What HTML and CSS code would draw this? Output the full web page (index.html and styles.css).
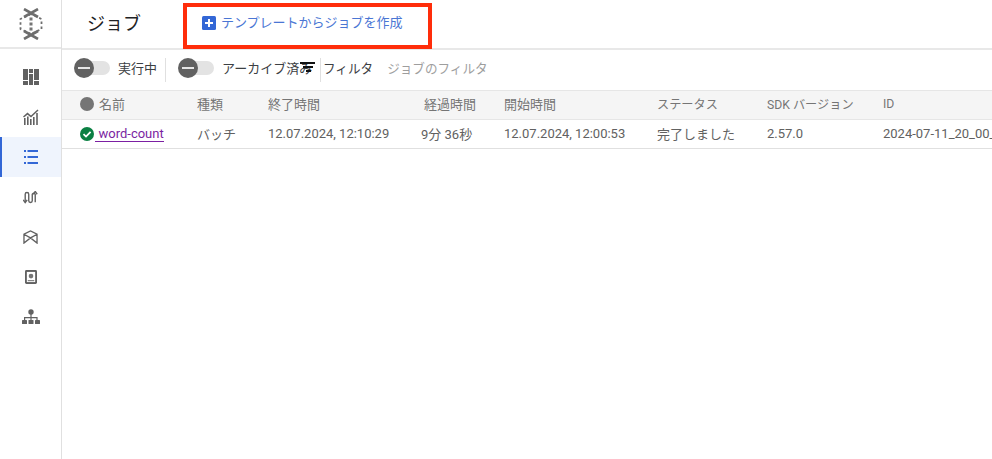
FILE: index.html
```html
<!DOCTYPE html>
<html lang="ja">
<head>
<meta charset="utf-8">
<title>ジョブ</title>
<link rel="stylesheet" href="styles.css">
</head>
<body>
<div class="app">
  <nav class="rail">
    <div class="logo">
      <svg width="24" height="32" viewBox="0 0 24 32" fill="none" stroke="#6e6e6e">
        <path d="M5 1 L19 9 M19 1 L5 9 M5 31 L19 23 M19 31 L5 23" stroke-width="2.600"/>
        <path d="M12 6 L1.500 11 V21 L12 26 L22.500 21 V11 Z" stroke-width="1.800" stroke-dasharray="2.500 2.500"/>
        <g fill="#757575" stroke="none"><rect x="10.500" y="9.500" width="3" height="3"/><rect x="10.500" y="14.500" width="3" height="3"/><rect x="10.500" y="19.500" width="3" height="3"/></g>
      </svg>
    </div>
    <a class="rail-item">
      <svg width="16" height="16" viewBox="0 0 16 16" fill="#616161"><path d="M0 0h5v11H0zM6 0h4v4H6zM11 0h5v11h-5zM6 5h4v11H6zM0 12h5v4H0zM11 12h5v4h-5z"/></svg>
    </a>
    <a class="rail-item">
      <svg width="16" height="16" viewBox="0 0 16 16" fill="#616161"><path d="M1 16V9h1.600v7zM4 16V7.500h1.600V16zM7 16V10h1.600v6zM10 16V8h1.600v8zM13.200 16V4h1.600v12z"/><path d="M.5 8 4.500 4.600 8 7.600 15 1" fill="none" stroke="#616161" stroke-width="1.500"/></svg>
    </a>
    <a class="rail-item active">
      <svg width="14" height="14" viewBox="0 0 14 14" fill="#3367d6"><path d="M0 0h2v2H0zM3.500 0H14v2H3.500zM0 6h2v2H0zM3.500 6H14v2H3.500zM0 12h2v2H0zM3.500 12H14v2H3.500z"/></svg>
    </a>
    <a class="rail-item">
      <svg width="15" height="13" viewBox="0 0 16 14" fill="none" stroke="#616161" stroke-width="1.500"><path d="M2.300 12V3.500a1.900 1.900 0 0 1 3.800 0V10.500a1.900 1.900 0 0 0 3.800 0V3.500a1.700 1.700 0 0 1 3.200 0V12"/><path d="M.2 9.500 2.300 12.500 4.400 9.500M11 3.500 13.100 .5 15.200 3.500"/></svg>
    </a>
    <a class="rail-item">
      <svg width="15" height="14" viewBox="0 0 16 15" fill="none" stroke="#616161" stroke-width="1.400"><path d="M1 14V4.500L8 1l7 3.500V14L8 8.500zM1 4.500 8 8.500l7-4"/></svg>
    </a>
    <a class="rail-item">
      <svg width="12" height="14" viewBox="0 0 13 15"><rect width="13" height="15" rx="1.500" fill="#616161"/><rect x="2" y="2" width="9" height="11" fill="#fff"/><circle cx="6.500" cy="6.500" r="2.500" fill="#757575"/><rect x="3" y="11" width="7" height="1" fill="#616161"/></svg>
    </a>
    <a class="rail-item">
      <svg width="18" height="16" viewBox="0 0 18 16" fill="#616161"><circle cx="9" cy="3" r="2.700"/><path d="M8.400 5h1.200v3h6v3h-1.200V9.200H9.600V11H8.400V9.200H3.200V11H2V8h6.400z"/><rect x="0" y="11" width="5" height="4" rx=".6"/><rect x="6.500" y="11" width="5" height="4" rx=".6"/><rect x="13" y="11" width="5" height="4" rx=".6"/></svg>
    </a>
  </nav>
  <main class="content">
    <header class="topbar">
      <h1 class="title">ジョブ</h1>
      <div class="create-box">
        <a class="create">
          <span class="plus"><svg width="14" height="14" viewBox="0 0 14 14"><rect width="14" height="14" rx="1.500" fill="#3367d6"/><path d="M3 7h8M7 3v8" stroke="#fff" stroke-width="2"/></svg></span>
          テンプレートからジョブを作成
        </a>
      </div>
    </header>
    <div class="toolbar">
      <span class="toggle"><span class="track"></span><span class="knob"></span></span>
      <span class="toggle-label running">実行中</span>
      <span class="divider"></span>
      <span class="toggle second"><span class="track"></span><span class="knob"></span></span>
      <span class="toggle-label archive">アーカイブ済み</span>
      <svg class="filter-icon" width="15" height="10" viewBox="0 0 15 10" fill="#111"><path d="M0 0h15v2H0zM3 4h10v2H3zM6 8h5v2H6z"/></svg>
      <span class="divider tight"></span>
      <span class="filter-label">フィルタ</span>
      <span class="filter-hint">ジョブのフィルタ</span>
    </div>
    <div class="row head">
      <div class="cell name"><span class="dot"></span>名前</div>
      <div class="cell">種類</div>
      <div class="cell">終了時間</div>
      <div class="cell">経過時間</div>
      <div class="cell">開始時間</div>
      <div class="cell narrow">ステータス</div>
      <div class="cell narrow">SDK バージョン</div>
      <div class="cell narrow">ID</div>
    </div>
    <div class="row body">
      <div class="cell name">
        <svg class="ok" width="14" height="14" viewBox="0 0 14 14"><circle cx="7" cy="7" r="7" fill="#0b8043"/><path d="M3.500 7.200 6 9.600 10.600 4.800" fill="none" stroke="#fff" stroke-width="1.800"/></svg>
        <a class="job-link">word-count</a>
      </div>
      <div class="cell">バッチ</div>
      <div class="cell">12.07.2024, 12:10:29</div>
      <div class="cell elapsed">9分 36秒</div>
      <div class="cell">12.07.2024, 12:00:53</div>
      <div class="cell">完了しました</div>
      <div class="cell">2.57.0</div>
      <div class="cell id">2024-07-11_20_00_</div>
    </div>
  </main>
</div>
</body>
</html>
```
FILE: styles.css
```css
* { box-sizing: border-box; }
html, body { margin: 0; height: 100%; overflow: hidden; background: #fff; }
body { font-family: Roboto, "Noto Sans CJK JP", sans-serif; font-size: 13px; color: #616161; }
.app { display: flex; height: 459px; width: 992px; overflow: hidden; }

.rail { width: 62px; flex: none; border-right: 1px solid #e0e0e0; display: flex; flex-direction: column; }
.logo { height: 49px; border-bottom: 2px solid #e8e8e8; display: flex; align-items: center; justify-content: center; margin-bottom: 8px; }
.rail-item { height: 40px; display: flex; align-items: center; justify-content: center; }
.rail-item.active { background: #eff4fd; box-shadow: inset 2px 0 0 #3367d6; }

.content { flex: 1; min-width: 0; display: flex; flex-direction: column; }
.topbar { height: 50px; flex: none; border-bottom: 2px solid #e8e8e8; display: flex; align-items: flex-start; }
.title { margin: 12px 0 0 25px; width: 96px; font-size: 18px; font-weight: 400; line-height: 24px; color: #202124; }
.create-box { margin-top: 3px; width: 249px; height: 46px; border: 4px solid #ff2d0a; padding: 4px 0 0 15px; }
.create { display: flex; align-items: center; gap: 5px; font-size: 13px; line-height: 24px; color: #4a76d4; }
.plus { display: flex; }

.toolbar { height: 40px; flex: none; display: flex; align-items: center; padding: 0 0 4px 12px; color: #3c4043; }
.toggle { position: relative; width: 36px; height: 20px; flex: none; }
.track { position: absolute; left: 6px; top: 3px; width: 30px; height: 14px; border-radius: 7px; background: #e3e3e3; }
.knob { position: absolute; left: 0; top: 0; width: 20px; height: 20px; border-radius: 50%; background: #616161; }
.knob::after { content: ""; position: absolute; left: 4px; top: 9px; width: 12px; height: 2px; background: #e6e6e6; }
.toggle-label { font-size: 13px; margin: 0 0 2px 8px; white-space: nowrap; }
.divider { width: 1px; height: 24px; background: #e0e0e0; margin: 4px 12px 0 8px; flex: none; }
.archive { width: 78px; }
.filter-icon { position: relative; margin: -2px 0 0 0; flex: none; }
.divider.tight { margin: 4px 2px 0 5px; }
.filter-label { font-size: 12.600px; margin-bottom: 2px; white-space: nowrap; }
.filter-hint { margin: 0 0 2px 14px; font-size: 12.600px; color: #9e9e9e; white-space: nowrap; }

.row { display: grid; grid-template-columns: 117px 71px 156px 80px 153px 110px 116px 1fr; padding-left: 18px; align-items: center; white-space: nowrap; }
.cell { font-size: 13px; }
.narrow { font-size: 12.200px; }
.head { height: 30px; padding-bottom: 3px; background: #f5f5f5; border-top: 1px solid #e6e6e6; border-bottom: 1px solid #e6e6e6; color: #757575; }
.body { height: 29px; padding-bottom: 1px; border-bottom: 1px solid #e0e0e0; }
.name { display: flex; align-items: center; }
.dot { width: 14px; height: 14px; border-radius: 50%; background: #757575; margin-right: 5px; }
.elapsed { margin-left: -3px; }
.ok { flex: none; margin-right: 2px; }
.job-link { color: #7b1fa2; border-bottom: 1px solid #7b1fa2; padding: 0 0 0 3.500px; line-height: 15px; margin-left: -1px; }
```
